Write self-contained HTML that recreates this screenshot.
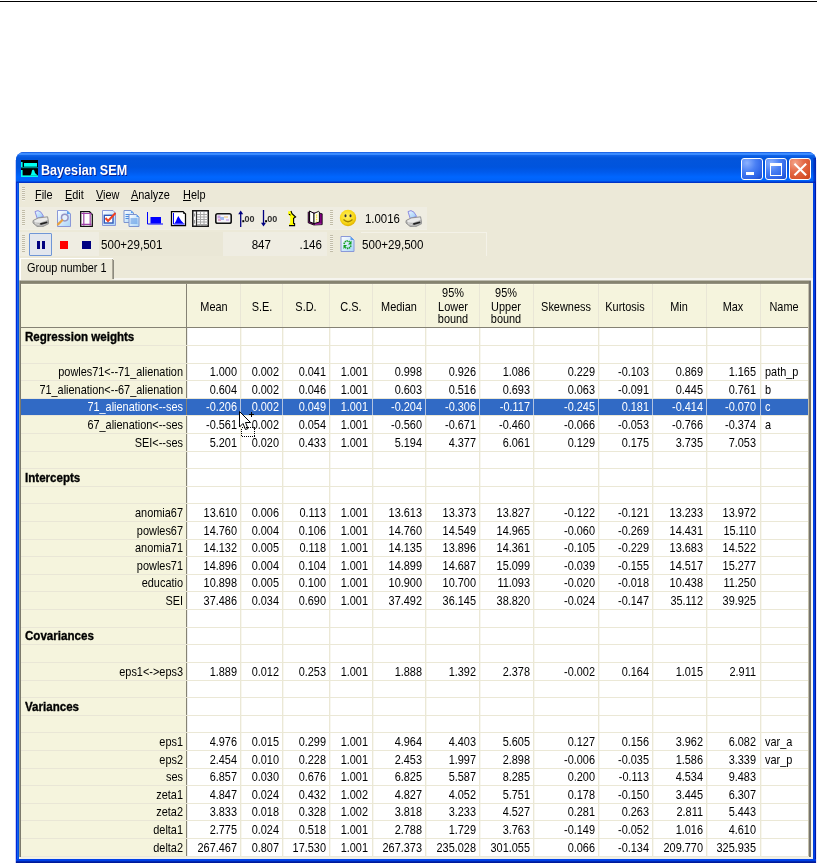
<!DOCTYPE html>
<html><head><meta charset="utf-8"><title>Bayesian SEM</title>
<style>
html,body{margin:0;padding:0;width:817px;height:863px;overflow:hidden;background:#fff}
body{position:relative;font-family:"Liberation Sans",sans-serif;font-size:11px;color:#000}
.a{position:absolute}
.t{position:absolute;line-height:11px;white-space:nowrap;font-size:11px}
.r{text-align:right}
.c{text-align:center}
.u{text-decoration:underline}
</style></head><body><div id="w" style="position:absolute;left:0;top:0;width:817px;height:863px;will-change:transform">

<div class="a" style="left:0;top:1px;width:817px;height:1px;background:#000"></div>
<div class="a" style="left:15px;top:160px;width:1px;height:703px;background:#C8CCF8"></div>
<div class="a" style="left:816px;top:160px;width:1px;height:703px;background:#E8EAFC"></div>
<div class="a" style="left:16px;top:152px;width:800px;height:720px;border-radius:8px 8px 0 0;background:#0841D8"></div>
<div class="a" style="left:16px;top:152px;width:800px;height:31px;border-radius:8px 8px 0 0;background:linear-gradient(to bottom,#0040D0 0px,#3D8EFF 1px,#3A8AFF 2.5px,#0F63E8 3.5px,#0355DB 6px,#0054DD 15px,#005AEC 20px,#0066FF 25px,#0062F8 29px,#0035CC 30px,#0030C0 31px)"></div>
<div class="a" style="left:813px;top:158px;width:3px;height:25px;background:linear-gradient(to right,rgba(0,40,200,0.35),rgba(0,20,160,0.8))"></div>
<div class="a" style="left:16px;top:183px;width:3px;height:680px;background:linear-gradient(to right,#0028D8 0px,#0028D8 1px,#1060F0 1px,#1060F0 2px,#0050E0 2px)"></div>
<div class="a" style="left:813px;top:183px;width:3px;height:680px;background:linear-gradient(to right,#0040E0 0px,#0040E0 2px,#0018A8 2px)"></div>
<div class="a" style="left:16px;top:859px;width:800px;height:4px;background:linear-gradient(to bottom,#0040E8 0px,#0040E8 1.5px,#0028B0 2.5px,#001090 4px)"></div>
<div class="a" style="left:19px;top:183px;width:794px;height:676px;background:#ECE9D8"></div>
<svg class="a" style="left:21px;top:160px" width="17" height="17" viewBox="0 0 17 17">
<rect x="0" y="0" width="17" height="17" fill="#000"/>
<rect x="3" y="3" width="13" height="3.7" fill="#00FFF0"/>
<rect x="0" y="2" width="1.6" height="5" fill="#00FFF0"/>
<rect x="0" y="7" width="17" height="1.2" fill="#007C80"/>
<rect x="0" y="10" width="1.6" height="7" fill="#00FFF0"/>
<rect x="0" y="15.4" width="17" height="1.6" fill="#00FFF0"/>
<polygon points="12.1,9.4 13.3,10.5 14,13 16.6,15.6 9.3,15.6 10.3,13.5 11,10.5" fill="#00FFF0"/>
</svg>
<div class="t" style="top:162.10px;font-size:15px;line-height:15px;left:41.30px;transform-origin:0 0;transform:scaleX(0.84);font-weight:bold;color:#fff;text-shadow:1px 1px 0 #0A1E8C;">Bayesian SEM</div>
<div class="a" style="left:741px;top:158px;width:20px;height:20px;border:1px solid #fff;border-radius:3px;background:radial-gradient(circle at 25% 20%,#8CB2FF 0%,#4A80F4 40%,#2C62E6 75%,#1A48C8 100%)"></div>
<div class="a" style="left:765px;top:158px;width:20px;height:20px;border:1px solid #fff;border-radius:3px;background:radial-gradient(circle at 25% 20%,#8CB2FF 0%,#4A80F4 40%,#2C62E6 75%,#1A48C8 100%)"></div>
<div class="a" style="left:789px;top:158px;width:20px;height:20px;border:1px solid #fff;border-radius:3px;background:radial-gradient(circle at 25% 20%,#F4A48A 0%,#E46A48 40%,#D8532C 75%,#C84018 100%)"></div>
<div class="a" style="left:746px;top:172px;width:8px;height:3px;background:#fff"></div>
<div class="a" style="left:770px;top:163px;width:10px;height:9px;border:1px solid #fff;border-top-width:3px"></div>
<svg class="a" style="left:789px;top:158px" width="22" height="22" viewBox="0 0 22 22">
<path d="M6.2 6.4 L16.4 16.6 M16.4 6.4 L6.2 16.6" stroke="#fff" stroke-width="2.1" stroke-linecap="square"/></svg>
<div class="a" style="left:22px;top:187px;width:3px;height:14px;background:repeating-linear-gradient(to bottom,#C1BCA8 0px,#C1BCA8 1px,#F4F2E8 1px,#F4F2E8 2px)"></div>
<div class="t" style="top:187.60px;font-size:13px;line-height:13px;left:35.20px;transform-origin:0 0;transform:scaleX(0.84);"><span class="u">F</span>ile</div>
<div class="t" style="top:187.60px;font-size:13px;line-height:13px;left:64.60px;transform-origin:0 0;transform:scaleX(0.84);"><span class="u">E</span>dit</div>
<div class="t" style="top:187.60px;font-size:13px;line-height:13px;left:96.40px;transform-origin:0 0;transform:scaleX(0.84);"><span class="u">V</span>iew</div>
<div class="t" style="top:187.60px;font-size:13px;line-height:13px;left:130.60px;transform-origin:0 0;transform:scaleX(0.84);"><span class="u">A</span>nalyze</div>
<div class="t" style="top:187.60px;font-size:13px;line-height:13px;left:182.80px;transform-origin:0 0;transform:scaleX(0.84);"><span class="u">H</span>elp</div>
<div class="a" style="left:19px;top:207px;width:408px;height:22px;background:#EFEDE2"></div>
<div class="a" style="left:19px;top:229px;width:408px;height:1px;background:#F1EFE5"></div>
<div class="a" style="left:22px;top:210px;width:3px;height:16px;background:repeating-linear-gradient(to bottom,#C1BCA8 0px,#C1BCA8 1px,#F4F2E8 1px,#F4F2E8 2px)"></div>
<div class="a" style="left:19px;top:232px;width:308px;height:24px;background:#EFEDE2"></div>
<div class="a" style="left:99px;top:232px;width:124px;height:24px;background:#EAE7D6"></div>
<div class="a" style="left:361px;top:232px;width:125px;height:1px;background:#F4F2E8"></div>
<div class="a" style="left:486px;top:232px;width:1px;height:24px;background:#F4F2E8"></div>
<div class="a" style="left:22px;top:235px;width:3px;height:17px;background:repeating-linear-gradient(to bottom,#C1BCA8 0px,#C1BCA8 1px,#F4F2E8 1px,#F4F2E8 2px)"></div>
<div class="a" style="left:330px;top:210px;width:3px;height:16px;background:repeating-linear-gradient(to bottom,#C1BCA8 0px,#C1BCA8 1px,#F4F2E8 1px,#F4F2E8 2px)"></div>
<div class="a" style="left:329.5px;top:235px;width:3px;height:17px;background:repeating-linear-gradient(to bottom,#C1BCA8 0px,#C1BCA8 1px,#F4F2E8 1px,#F4F2E8 2px)"></div>
<svg class="a" style="left:32px;top:210px" width="17" height="17" viewBox="0 0 17 17"><defs><linearGradient id="gpap" x1="0" y1="0" x2="1" y2="1"><stop offset="0" stop-color="#EEF6FF"/><stop offset="1" stop-color="#90C8F8"/></linearGradient></defs>
<path d="M3 1.6 L6 0.6 L9 2.2 L11.6 6.4 L5.2 8.4 Z" fill="url(#gpap)" stroke="#8C8CE0" stroke-width="1"/>
<path d="M1 10.6 L6 8 L15.6 6.8 L16.8 13.6 L10 17 L5 16.4 L1 13 Z" fill="#B4B4B4" stroke="#8E8E8E" stroke-width="0.9"/>
<path d="M2 10.8 L6.4 8.6 L15 7.6 L15.6 10 L8 12.8 L3 12.4 Z" fill="#EAEAEA"/>
<path d="M8 13.2 L15 11.4 L15.6 13 L8.6 15 Z" fill="#202020"/>
<path d="M3 13.5 L7 14.5" stroke="#D8D8D8" stroke-width="1"/></svg>
<svg class="a" style="left:56px;top:210px" width="16" height="17" viewBox="0 0 16 17"><defs><linearGradient id="gdoc" x1="0" y1="0" x2="1" y2="1"><stop offset="0" stop-color="#FFFFFF"/><stop offset="1" stop-color="#A8D4F8"/></linearGradient></defs>
<path d="M1.5 0.5 L11 0.5 L14.5 4 L14.5 16.5 L1.5 16.5 Z" fill="url(#gdoc)" stroke="#8A98D8" stroke-width="1"/>
<path d="M11 0.5 L11 4 L14.5 4 Z" fill="#5AA0F0"/>
<circle cx="8.8" cy="7.6" r="3.3" fill="#E4F0FC" stroke="#9494C4" stroke-width="1.5"/>
<path d="M6.2 10.2 L2 14.4" stroke="#E8A040" stroke-width="2.2" stroke-linecap="round"/></svg>
<svg class="a" style="left:80px;top:211px" width="13" height="16" viewBox="0 0 13 16"><path d="M0.7 0.7 L9.5 0.7 L12.3 3.5 L12.3 15.3 L0.7 15.3 Z" fill="#fff" stroke="#101010" stroke-width="1.3"/>
<path d="M1.2 2.5 L11.6 2.5 M1.2 13.3 L11.6 13.3 M3.8 1.2 L3.8 14.8 M10.2 2 L10.2 14.8" stroke="#A040A8" stroke-width="1.2"/></svg>
<svg class="a" style="left:102px;top:210px" width="14" height="16" viewBox="0 0 14 16"><path d="M0.5 0.5 L11 0.5 L13.5 3 L13.5 15.5 L0.5 15.5 Z" fill="url(#gdoc)" stroke="#8A98D8" stroke-width="1"/>
<rect x="2.3" y="5.3" width="8.7" height="7.7" fill="#fff" stroke="#3058B8" stroke-width="1.4"/>
<path d="M3.5 8 L6 11 L13.5 3" stroke="#F04020" stroke-width="2" fill="none"/></svg>
<svg class="a" style="left:123px;top:210px" width="17" height="17" viewBox="0 0 17 17"><path d="M1 0.5 L8 0.5 L10.5 3 L10.5 12.5 L1 12.5 Z" fill="url(#gdoc)" stroke="#7C94D0" stroke-width="1"/>
<path d="M8 0.5 L8 3 L10.5 3 Z" fill="#5AA0F0"/>
<path d="M2.5 4.5 L8.5 4.5 M2.5 6.5 L8.5 6.5 M2.5 8.5 L8.5 8.5" stroke="#4C8CE0" stroke-width="1"/>
<path d="M6 4.5 L13.5 4.5 L16 7 L16 16.5 L6 16.5 Z" fill="url(#gdoc)" stroke="#7C94D0" stroke-width="1"/>
<path d="M13.5 4.5 L13.5 7 L16 7 Z" fill="#5AA0F0"/>
<path d="M7.5 9 L14.5 9 M7.5 11 L14.5 11 M7.5 13 L14.5 13" stroke="#4C8CE0" stroke-width="1"/></svg>
<svg class="a" style="left:146px;top:212px" width="18" height="13" viewBox="0 0 18 13"><path d="M1.5 0 L1.5 12 L17 12" stroke="#0000FF" stroke-width="1" fill="none"/>
<rect x="4.5" y="5" width="10.5" height="6.5" fill="#0000FF"/></svg>
<svg class="a" style="left:170px;top:210px" width="17" height="17" viewBox="0 0 17 17"><path d="M1.5 1.5 L13 1.5 L15.5 4 L15.5 15.5 L1.5 15.5 Z" fill="#fff" stroke="#000" stroke-width="1.25"/>
<path d="M13.5 1.5 L13.5 3.5 L15.5 3.5" stroke="#181818" stroke-width="0.9" fill="none"/>
<path d="M3.5 3 L3.5 14 L14.5 14" stroke="#0000FF" stroke-width="1" fill="none"/>
<path d="M8.3 6 L9.8 8.5 L11 10.5 L13.8 13.6 L4.5 13.6 L6 11 L7 8.5 Z" fill="#0000FF"/></svg>
<svg class="a" style="left:192px;top:210px" width="17" height="17" viewBox="0 0 17 17"><rect x="0.75" y="0.75" width="15.5" height="15.5" fill="#FCFCFC" stroke="#181818" stroke-width="1.5"/>
<path d="M4.5 1 L4.5 16" stroke="#303030" stroke-width="1.2"/>
<path d="M2.6 3.5 L2.6 6.5 M2.6 10 L2.6 13.5" stroke="#909090" stroke-width="1"/>
<path d="M5 4.5 L15.5 4.5 M5 7 L15.5 7 M5 9.5 L15.5 9.5 M5 12 L15.5 12 M5 14.5 L15.5 14.5 M8.5 2 L8.5 15.5 M12 2 L12 15.5" stroke="#A8A8A8" stroke-width="1"/></svg>
<svg class="a" style="left:215px;top:213px" width="17" height="11" viewBox="0 0 17 11"><rect x="0.8" y="0.8" width="15.4" height="9.4" rx="1.8" fill="#F4F4FA" stroke="#141414" stroke-width="1.6"/>
<rect x="2.5" y="2.5" width="3" height="3" fill="#C8A0E0"/>
<rect x="5" y="4" width="4" height="3" fill="#A0B8F0"/>
<rect x="3" y="6" width="3" height="2" fill="#E0A8C8"/>
<rect x="9" y="3" width="4" height="2" fill="#F0D8B0"/>
<rect x="11" y="6" width="3" height="2" fill="#D8C0F0"/></svg>
<svg class="a" style="left:237px;top:210px" width="19" height="17" viewBox="0 0 19 17"><path d="M3.7 2.5 L3.7 17" stroke="#000080" stroke-width="1.3"/>
<path d="M3.7 0.6 L1.2 4.2 L6.2 4.2 Z" fill="#000080"/>
<rect x="5.3" y="10.2" width="2" height="2" fill="#000"/></svg>
<div class="t" style="top:214.58px;font-size:9px;line-height:9px;left:244.60px;transform-origin:0 0;font-weight:bold;color:#303030;">00</div>
<svg class="a" style="left:260px;top:210px" width="19" height="17" viewBox="0 0 19 17"><path d="M3.5 0 L3.5 14" stroke="#000080" stroke-width="1.3"/>
<path d="M3.5 16.5 L1 12.8 L6 12.8 Z" fill="#000080"/>
<rect x="5.1" y="10.2" width="2" height="2" fill="#000"/></svg>
<div class="t" style="top:214.58px;font-size:9px;line-height:9px;left:267.20px;transform-origin:0 0;font-weight:bold;color:#303030;">00</div>
<svg class="a" style="left:287px;top:210px" width="10" height="17" viewBox="0 0 10 17"><path d="M1 1.5 L4 1 L5 3.6 L8.6 7 L6.6 8.2 L6.6 13.4 L7.6 13.6 L7.6 15.6 L2 15.6 L2.2 13.6 L3.2 13.4 L3.2 6.4 L1.4 4.6 Z" fill="#FFFF00"/>
<path d="M4 1 L5 3.6 L8.6 7 L6.6 8.2 L6.6 13.4 L7.6 13.6 L7.6 15.6 L2 15.6" stroke="#000" stroke-width="1.1" fill="none"/>
<path d="M1.8 4.2 L3.6 5" stroke="#000" stroke-width="1"/></svg>
<svg class="a" style="left:307px;top:210px" width="16" height="16" viewBox="0 0 16 16"><path d="M1.2 1.8 L1.2 12.8 L6.8 15 L15.2 14.6 L15.2 3.8 L12.6 3.2" fill="#800080" stroke="#000" stroke-width="0.8"/>
<path d="M2.6 1 L7 3.4 L7 13.6 L2.6 11.8 Z" fill="#fff" stroke="#000" stroke-width="1"/>
<path d="M7 3.4 L11.6 1.4 L12.4 2 L12.4 12 L7 13.6 Z" fill="#FFFFF0" stroke="#000" stroke-width="0.9"/>
<path d="M9.6 4.5 L9.6 11.5" stroke="#F0E020" stroke-width="1.4" stroke-dasharray="1.2 0.9"/>
<path d="M8 14.4 L14.4 13.8" stroke="#A030A0" stroke-width="1"/></svg>
<svg class="a" style="left:339px;top:209px" width="18" height="18" viewBox="0 0 18 18"><defs><radialGradient id="gsm" cx="0.45" cy="0.4" r="0.6"><stop offset="0" stop-color="#FFF060"/><stop offset="0.7" stop-color="#F8D818"/><stop offset="1" stop-color="#E0B000"/></radialGradient></defs>
<circle cx="9" cy="9" r="8.2" fill="url(#gsm)"/>
<ellipse cx="6.5" cy="6.8" rx="1" ry="1.5" fill="#2A2A40"/>
<ellipse cx="11.5" cy="6.8" rx="1" ry="1.5" fill="#2A2A40"/>
<path d="M4.5 10.5 Q9 15 13.5 10.5" stroke="#A08000" stroke-width="1.2" fill="none"/></svg>
<div class="t" style="top:213.44px;font-size:12px;line-height:12px;left:364.80px;transform-origin:0 0;transform:scaleX(0.95);">1.0016</div>
<svg class="a" style="left:405px;top:210px" width="17" height="17" viewBox="0 0 17 17"><defs><linearGradient id="gpap" x1="0" y1="0" x2="1" y2="1"><stop offset="0" stop-color="#EEF6FF"/><stop offset="1" stop-color="#90C8F8"/></linearGradient></defs>
<path d="M3 1.6 L6 0.6 L9 2.2 L11.6 6.4 L5.2 8.4 Z" fill="url(#gpap)" stroke="#8C8CE0" stroke-width="1"/>
<path d="M1 10.6 L6 8 L15.6 6.8 L16.8 13.6 L10 17 L5 16.4 L1 13 Z" fill="#B4B4B4" stroke="#8E8E8E" stroke-width="0.9"/>
<path d="M2 10.8 L6.4 8.6 L15 7.6 L15.6 10 L8 12.8 L3 12.4 Z" fill="#EAEAEA"/>
<path d="M8 13.2 L15 11.4 L15.6 13 L8.6 15 Z" fill="#202020"/>
<path d="M3 13.5 L7 14.5" stroke="#D8D8D8" stroke-width="1"/></svg>
<div class="a" style="left:29px;top:233px;width:21px;height:21px;border:1px solid #6F96D6;border-radius:1px;background:#E2E6EE"></div>
<div class="a" style="left:37px;top:241px;width:3px;height:8px;background:#000080"></div>
<div class="a" style="left:42px;top:241px;width:3px;height:8px;background:#000080"></div>
<div class="a" style="left:59.5px;top:241px;width:8.5px;height:8.2px;background:#FF0000"></div>
<div class="a" style="left:82px;top:241px;width:9px;height:8.2px;background:#000080"></div>
<div class="t" style="top:239.44px;font-size:12px;line-height:12px;left:100.80px;transform-origin:0 0;transform:scaleX(0.965);">500+29,501</div>
<div class="t" style="top:239.44px;font-size:12px;line-height:12px;left:71.30px;width:200px;text-align:right;transform-origin:100% 0;transform:scaleX(0.965);">847</div>
<div class="t" style="top:239.44px;font-size:12px;line-height:12px;left:121.70px;width:200px;text-align:right;transform-origin:100% 0;transform:scaleX(0.965);">.146</div>
<svg class="a" style="left:340px;top:236px" width="15" height="16" viewBox="0 0 15 16"><path d="M1 0.5 L10.5 0.5 L14 4 L14 15.5 L1 15.5 Z" fill="url(#gdoc)" stroke="#8A98D8" stroke-width="1"/>
<path d="M10.5 0.5 L10.5 4 L14 4 Z" fill="#5AA0F0"/>
<path d="M4 8 Q5 4.5 8.5 5 L10.5 6.5" stroke="#10A020" stroke-width="1.6" fill="none" stroke-dasharray="1.4 0.6"/>
<path d="M11.5 4.5 L11.5 8.5 L8 8.5 Z" fill="#10A020"/>
<path d="M11 9.5 Q10 12.8 6.5 12.3 L4.5 11" stroke="#10A020" stroke-width="1.6" fill="none" stroke-dasharray="1.4 0.6"/>
<path d="M3.5 13 L3.5 9 L7 9 Z" fill="#10A020"/></svg>
<div class="t" style="top:239.44px;font-size:12px;line-height:12px;left:361.80px;transform-origin:0 0;transform:scaleX(0.965);">500+29,500</div>
<div class="a" style="left:20px;top:258px;width:92px;height:21px;background:#ECE9D8;border-top:1px solid #fff;border-left:1px solid #fff"></div>
<div class="a" style="left:112px;top:259px;width:1px;height:20px;background:#ACA899"></div>
<div class="a" style="left:113px;top:260px;width:1px;height:19px;background:#8C8A7E"></div>
<div class="t" style="top:261.00px;font-size:13px;line-height:13px;left:27.00px;transform-origin:0 0;transform:scaleX(0.84);">Group number 1</div>
<div class="a" style="left:21px;top:284px;width:787px;height:572px;background:#fff"></div>
<div class="a" style="left:21px;top:284px;width:787px;height:43px;background:#F5F4DD"></div>
<div class="a" style="left:21px;top:328px;width:166px;height:528px;background:#F5F4DD"></div>
<div class="a" style="left:21px;top:284px;width:787px;height:1px;background:#FAF9E4"></div>
<div class="a" style="left:114px;top:278px;width:699px;height:2px;background:#F6F5EF"></div>
<div class="a" style="left:19px;top:280px;width:792px;height:1px;background:#BDBBAE"></div>
<div class="a" style="left:19px;top:281px;width:792px;height:2px;background:#85836F"></div>
<div class="a" style="left:19px;top:283px;width:790px;height:1px;background:#93907F"></div>
<div class="a" style="left:20px;top:281px;width:1px;height:576px;background:#7C7A6C"></div>
<div class="a" style="left:19px;top:281px;width:1px;height:576px;background:#A0A090"></div>
<div class="a" style="left:808px;top:284px;width:1px;height:572px;background:#C4C0AC"></div>
<div class="a" style="left:809px;top:281px;width:2px;height:576px;background:#76746C"></div>
<div class="a" style="left:811px;top:279px;width:2px;height:580px;background:#F6F6EE"></div>
<div class="a" style="left:21px;top:856px;width:788px;height:1px;background:#ECE9D8"></div>
<div class="a" style="left:19px;top:857px;width:794px;height:2px;background:#F0F0E8"></div>
<div class="a" style="left:186px;top:284px;width:1px;height:572px;background:#858274"></div>
<div class="a" style="left:187px;top:328px;width:1px;height:528px;background:#EDEDEA"></div>
<div class="a" style="left:240px;top:284px;width:1px;height:43px;background:#E9E6D6"></div>
<div class="a" style="left:240px;top:328px;width:1px;height:528px;background:#EBE8D6"></div>
<div class="a" style="left:241px;top:328px;width:1px;height:528px;background:#F8F7F0"></div>
<div class="a" style="left:282px;top:284px;width:1px;height:43px;background:#E9E6D6"></div>
<div class="a" style="left:282px;top:328px;width:1px;height:528px;background:#EBE8D6"></div>
<div class="a" style="left:283px;top:328px;width:1px;height:528px;background:#F8F7F0"></div>
<div class="a" style="left:329px;top:284px;width:1px;height:43px;background:#E9E6D6"></div>
<div class="a" style="left:329px;top:328px;width:1px;height:528px;background:#EBE8D6"></div>
<div class="a" style="left:330px;top:328px;width:1px;height:528px;background:#F8F7F0"></div>
<div class="a" style="left:372px;top:284px;width:1px;height:43px;background:#E9E6D6"></div>
<div class="a" style="left:372px;top:328px;width:1px;height:528px;background:#EBE8D6"></div>
<div class="a" style="left:373px;top:328px;width:1px;height:528px;background:#F8F7F0"></div>
<div class="a" style="left:425px;top:284px;width:1px;height:43px;background:#E9E6D6"></div>
<div class="a" style="left:425px;top:328px;width:1px;height:528px;background:#EBE8D6"></div>
<div class="a" style="left:426px;top:328px;width:1px;height:528px;background:#F8F7F0"></div>
<div class="a" style="left:479px;top:284px;width:1px;height:43px;background:#E9E6D6"></div>
<div class="a" style="left:479px;top:328px;width:1px;height:528px;background:#EBE8D6"></div>
<div class="a" style="left:480px;top:328px;width:1px;height:528px;background:#F8F7F0"></div>
<div class="a" style="left:533px;top:284px;width:1px;height:43px;background:#E9E6D6"></div>
<div class="a" style="left:533px;top:328px;width:1px;height:528px;background:#EBE8D6"></div>
<div class="a" style="left:534px;top:328px;width:1px;height:528px;background:#F8F7F0"></div>
<div class="a" style="left:598px;top:284px;width:1px;height:43px;background:#E9E6D6"></div>
<div class="a" style="left:598px;top:328px;width:1px;height:528px;background:#EBE8D6"></div>
<div class="a" style="left:599px;top:328px;width:1px;height:528px;background:#F8F7F0"></div>
<div class="a" style="left:652px;top:284px;width:1px;height:43px;background:#E9E6D6"></div>
<div class="a" style="left:652px;top:328px;width:1px;height:528px;background:#EBE8D6"></div>
<div class="a" style="left:653px;top:328px;width:1px;height:528px;background:#F8F7F0"></div>
<div class="a" style="left:706px;top:284px;width:1px;height:43px;background:#E9E6D6"></div>
<div class="a" style="left:706px;top:328px;width:1px;height:528px;background:#EBE8D6"></div>
<div class="a" style="left:707px;top:328px;width:1px;height:528px;background:#F8F7F0"></div>
<div class="a" style="left:760px;top:284px;width:1px;height:43px;background:#E9E6D6"></div>
<div class="a" style="left:760px;top:328px;width:1px;height:528px;background:#EBE8D6"></div>
<div class="a" style="left:761px;top:328px;width:1px;height:528px;background:#F8F7F0"></div>
<div class="a" style="left:21px;top:345px;width:166px;height:1px;background:#E9E6D6"></div>
<div class="a" style="left:187px;top:345px;width:621px;height:1px;background:#EBE8D6"></div>
<div class="a" style="left:21px;top:363px;width:166px;height:1px;background:#E9E6D6"></div>
<div class="a" style="left:187px;top:363px;width:621px;height:1px;background:#EBE8D6"></div>
<div class="a" style="left:21px;top:380px;width:166px;height:1px;background:#E9E6D6"></div>
<div class="a" style="left:187px;top:380px;width:621px;height:1px;background:#EBE8D6"></div>
<div class="a" style="left:21px;top:398px;width:166px;height:1px;background:#E9E6D6"></div>
<div class="a" style="left:187px;top:398px;width:621px;height:1px;background:#EBE8D6"></div>
<div class="a" style="left:21px;top:415px;width:166px;height:1px;background:#E9E6D6"></div>
<div class="a" style="left:187px;top:415px;width:621px;height:1px;background:#EBE8D6"></div>
<div class="a" style="left:21px;top:433px;width:166px;height:1px;background:#E9E6D6"></div>
<div class="a" style="left:187px;top:433px;width:621px;height:1px;background:#EBE8D6"></div>
<div class="a" style="left:21px;top:451px;width:166px;height:1px;background:#E9E6D6"></div>
<div class="a" style="left:187px;top:451px;width:621px;height:1px;background:#EBE8D6"></div>
<div class="a" style="left:21px;top:468px;width:166px;height:1px;background:#E9E6D6"></div>
<div class="a" style="left:187px;top:468px;width:621px;height:1px;background:#EBE8D6"></div>
<div class="a" style="left:21px;top:486px;width:166px;height:1px;background:#E9E6D6"></div>
<div class="a" style="left:187px;top:486px;width:621px;height:1px;background:#EBE8D6"></div>
<div class="a" style="left:21px;top:503px;width:166px;height:1px;background:#E9E6D6"></div>
<div class="a" style="left:187px;top:503px;width:621px;height:1px;background:#EBE8D6"></div>
<div class="a" style="left:21px;top:521px;width:166px;height:1px;background:#E9E6D6"></div>
<div class="a" style="left:187px;top:521px;width:621px;height:1px;background:#EBE8D6"></div>
<div class="a" style="left:21px;top:539px;width:166px;height:1px;background:#E9E6D6"></div>
<div class="a" style="left:187px;top:539px;width:621px;height:1px;background:#EBE8D6"></div>
<div class="a" style="left:21px;top:556px;width:166px;height:1px;background:#E9E6D6"></div>
<div class="a" style="left:187px;top:556px;width:621px;height:1px;background:#EBE8D6"></div>
<div class="a" style="left:21px;top:574px;width:166px;height:1px;background:#E9E6D6"></div>
<div class="a" style="left:187px;top:574px;width:621px;height:1px;background:#EBE8D6"></div>
<div class="a" style="left:21px;top:591px;width:166px;height:1px;background:#E9E6D6"></div>
<div class="a" style="left:187px;top:591px;width:621px;height:1px;background:#EBE8D6"></div>
<div class="a" style="left:21px;top:609px;width:166px;height:1px;background:#E9E6D6"></div>
<div class="a" style="left:187px;top:609px;width:621px;height:1px;background:#EBE8D6"></div>
<div class="a" style="left:21px;top:627px;width:166px;height:1px;background:#E9E6D6"></div>
<div class="a" style="left:187px;top:627px;width:621px;height:1px;background:#EBE8D6"></div>
<div class="a" style="left:21px;top:644px;width:166px;height:1px;background:#E9E6D6"></div>
<div class="a" style="left:187px;top:644px;width:621px;height:1px;background:#EBE8D6"></div>
<div class="a" style="left:21px;top:662px;width:166px;height:1px;background:#E9E6D6"></div>
<div class="a" style="left:187px;top:662px;width:621px;height:1px;background:#EBE8D6"></div>
<div class="a" style="left:21px;top:680px;width:166px;height:1px;background:#E9E6D6"></div>
<div class="a" style="left:187px;top:680px;width:621px;height:1px;background:#EBE8D6"></div>
<div class="a" style="left:21px;top:697px;width:166px;height:1px;background:#E9E6D6"></div>
<div class="a" style="left:187px;top:697px;width:621px;height:1px;background:#EBE8D6"></div>
<div class="a" style="left:21px;top:715px;width:166px;height:1px;background:#E9E6D6"></div>
<div class="a" style="left:187px;top:715px;width:621px;height:1px;background:#EBE8D6"></div>
<div class="a" style="left:21px;top:732px;width:166px;height:1px;background:#E9E6D6"></div>
<div class="a" style="left:187px;top:732px;width:621px;height:1px;background:#EBE8D6"></div>
<div class="a" style="left:21px;top:750px;width:166px;height:1px;background:#E9E6D6"></div>
<div class="a" style="left:187px;top:750px;width:621px;height:1px;background:#EBE8D6"></div>
<div class="a" style="left:21px;top:768px;width:166px;height:1px;background:#E9E6D6"></div>
<div class="a" style="left:187px;top:768px;width:621px;height:1px;background:#EBE8D6"></div>
<div class="a" style="left:21px;top:785px;width:166px;height:1px;background:#E9E6D6"></div>
<div class="a" style="left:187px;top:785px;width:621px;height:1px;background:#EBE8D6"></div>
<div class="a" style="left:21px;top:803px;width:166px;height:1px;background:#E9E6D6"></div>
<div class="a" style="left:187px;top:803px;width:621px;height:1px;background:#EBE8D6"></div>
<div class="a" style="left:21px;top:820px;width:166px;height:1px;background:#E9E6D6"></div>
<div class="a" style="left:187px;top:820px;width:621px;height:1px;background:#EBE8D6"></div>
<div class="a" style="left:21px;top:838px;width:166px;height:1px;background:#E9E6D6"></div>
<div class="a" style="left:187px;top:838px;width:621px;height:1px;background:#EBE8D6"></div>
<div class="a" style="left:21px;top:327px;width:787px;height:1px;background:#858274"></div>
<div class="a" style="left:21px;top:399px;width:787px;height:16px;background:#316AC5"></div>
<div class="a" style="left:186px;top:399px;width:1px;height:16px;background:#858274"></div>
<div class="a" style="left:240px;top:399px;width:1px;height:16px;background:#B4C4E0"></div>
<div class="a" style="left:282px;top:399px;width:1px;height:16px;background:#B4C4E0"></div>
<div class="a" style="left:329px;top:399px;width:1px;height:16px;background:#B4C4E0"></div>
<div class="a" style="left:372px;top:399px;width:1px;height:16px;background:#B4C4E0"></div>
<div class="a" style="left:425px;top:399px;width:1px;height:16px;background:#B4C4E0"></div>
<div class="a" style="left:479px;top:399px;width:1px;height:16px;background:#B4C4E0"></div>
<div class="a" style="left:533px;top:399px;width:1px;height:16px;background:#B4C4E0"></div>
<div class="a" style="left:598px;top:399px;width:1px;height:16px;background:#B4C4E0"></div>
<div class="a" style="left:652px;top:399px;width:1px;height:16px;background:#B4C4E0"></div>
<div class="a" style="left:706px;top:399px;width:1px;height:16px;background:#B4C4E0"></div>
<div class="a" style="left:760px;top:399px;width:1px;height:16px;background:#B4C4E0"></div>
<div class="t" style="top:299.60px;font-size:13px;line-height:13px;left:113.55px;width:200px;text-align:center;transform-origin:50% 0;transform:scaleX(0.84);">Mean</div>
<div class="t" style="top:299.60px;font-size:13px;line-height:13px;left:161.50px;width:200px;text-align:center;transform-origin:50% 0;transform:scaleX(0.84);">S.E.</div>
<div class="t" style="top:299.60px;font-size:13px;line-height:13px;left:206.15px;width:200px;text-align:center;transform-origin:50% 0;transform:scaleX(0.84);">S.D.</div>
<div class="t" style="top:299.60px;font-size:13px;line-height:13px;left:250.90px;width:200px;text-align:center;transform-origin:50% 0;transform:scaleX(0.84);">C.S.</div>
<div class="t" style="top:299.60px;font-size:13px;line-height:13px;left:298.80px;width:200px;text-align:center;transform-origin:50% 0;transform:scaleX(0.84);">Median</div>
<div class="t" style="top:285.60px;font-size:13px;line-height:13px;left:352.50px;width:200px;text-align:center;transform-origin:50% 0;transform:scaleX(0.84);">95%</div>
<div class="t" style="top:299.60px;font-size:13px;line-height:13px;left:352.50px;width:200px;text-align:center;transform-origin:50% 0;transform:scaleX(0.84);">Lower</div>
<div class="t" style="top:311.60px;font-size:13px;line-height:13px;left:352.50px;width:200px;text-align:center;transform-origin:50% 0;transform:scaleX(0.84);">bound</div>
<div class="t" style="top:285.60px;font-size:13px;line-height:13px;left:406.45px;width:200px;text-align:center;transform-origin:50% 0;transform:scaleX(0.84);">95%</div>
<div class="t" style="top:299.60px;font-size:13px;line-height:13px;left:406.45px;width:200px;text-align:center;transform-origin:50% 0;transform:scaleX(0.84);">Upper</div>
<div class="t" style="top:311.60px;font-size:13px;line-height:13px;left:406.45px;width:200px;text-align:center;transform-origin:50% 0;transform:scaleX(0.84);">bound</div>
<div class="t" style="top:299.60px;font-size:13px;line-height:13px;left:465.95px;width:200px;text-align:center;transform-origin:50% 0;transform:scaleX(0.84);">Skewness</div>
<div class="t" style="top:299.60px;font-size:13px;line-height:13px;left:525.45px;width:200px;text-align:center;transform-origin:50% 0;transform:scaleX(0.84);">Kurtosis</div>
<div class="t" style="top:299.60px;font-size:13px;line-height:13px;left:579.45px;width:200px;text-align:center;transform-origin:50% 0;transform:scaleX(0.84);">Min</div>
<div class="t" style="top:299.60px;font-size:13px;line-height:13px;left:633.25px;width:200px;text-align:center;transform-origin:50% 0;transform:scaleX(0.84);">Max</div>
<div class="t" style="top:299.60px;font-size:13px;line-height:13px;left:684.05px;width:200px;text-align:center;transform-origin:50% 0;transform:scaleX(0.84);">Name</div>
<div class="t" style="top:330.00px;font-size:13px;line-height:13px;left:25.00px;transform-origin:0 0;transform:scaleX(0.89);font-weight:bold;-webkit-text-stroke:0.35px #000;">Regression weights</div>
<div class="t" style="top:365.00px;font-size:13px;line-height:13px;left:-16.80px;width:200px;text-align:right;transform-origin:100% 0;transform:scaleX(0.84);">powles71&lt;--71_alienation</div>
<div class="t" style="top:365.00px;font-size:13px;line-height:13px;left:36.60px;width:200px;text-align:right;transform-origin:100% 0;transform:scaleX(0.84);">1.000</div>
<div class="t" style="top:365.00px;font-size:13px;line-height:13px;left:78.60px;width:200px;text-align:right;transform-origin:100% 0;transform:scaleX(0.84);">0.002</div>
<div class="t" style="top:365.00px;font-size:13px;line-height:13px;left:125.90px;width:200px;text-align:right;transform-origin:100% 0;transform:scaleX(0.84);">0.041</div>
<div class="t" style="top:365.00px;font-size:13px;line-height:13px;left:168.10px;width:200px;text-align:right;transform-origin:100% 0;transform:scaleX(0.84);">1.001</div>
<div class="t" style="top:365.00px;font-size:13px;line-height:13px;left:221.70px;width:200px;text-align:right;transform-origin:100% 0;transform:scaleX(0.84);">0.998</div>
<div class="t" style="top:365.00px;font-size:13px;line-height:13px;left:275.50px;width:200px;text-align:right;transform-origin:100% 0;transform:scaleX(0.84);">0.926</div>
<div class="t" style="top:365.00px;font-size:13px;line-height:13px;left:329.60px;width:200px;text-align:right;transform-origin:100% 0;transform:scaleX(0.84);">1.086</div>
<div class="t" style="top:365.00px;font-size:13px;line-height:13px;left:394.50px;width:200px;text-align:right;transform-origin:100% 0;transform:scaleX(0.84);">0.229</div>
<div class="t" style="top:365.00px;font-size:13px;line-height:13px;left:448.60px;width:200px;text-align:right;transform-origin:100% 0;transform:scaleX(0.84);">-0.103</div>
<div class="t" style="top:365.00px;font-size:13px;line-height:13px;left:502.50px;width:200px;text-align:right;transform-origin:100% 0;transform:scaleX(0.84);">0.869</div>
<div class="t" style="top:365.00px;font-size:13px;line-height:13px;left:556.20px;width:200px;text-align:right;transform-origin:100% 0;transform:scaleX(0.84);">1.165</div>
<div class="t" style="top:365.00px;font-size:13px;line-height:13px;left:764.80px;transform-origin:0 0;transform:scaleX(0.84);">path_p</div>
<div class="t" style="top:383.00px;font-size:13px;line-height:13px;left:-16.80px;width:200px;text-align:right;transform-origin:100% 0;transform:scaleX(0.84);">71_alienation&lt;--67_alienation</div>
<div class="t" style="top:383.00px;font-size:13px;line-height:13px;left:36.60px;width:200px;text-align:right;transform-origin:100% 0;transform:scaleX(0.84);">0.604</div>
<div class="t" style="top:383.00px;font-size:13px;line-height:13px;left:78.60px;width:200px;text-align:right;transform-origin:100% 0;transform:scaleX(0.84);">0.002</div>
<div class="t" style="top:383.00px;font-size:13px;line-height:13px;left:125.90px;width:200px;text-align:right;transform-origin:100% 0;transform:scaleX(0.84);">0.046</div>
<div class="t" style="top:383.00px;font-size:13px;line-height:13px;left:168.10px;width:200px;text-align:right;transform-origin:100% 0;transform:scaleX(0.84);">1.001</div>
<div class="t" style="top:383.00px;font-size:13px;line-height:13px;left:221.70px;width:200px;text-align:right;transform-origin:100% 0;transform:scaleX(0.84);">0.603</div>
<div class="t" style="top:383.00px;font-size:13px;line-height:13px;left:275.50px;width:200px;text-align:right;transform-origin:100% 0;transform:scaleX(0.84);">0.516</div>
<div class="t" style="top:383.00px;font-size:13px;line-height:13px;left:329.60px;width:200px;text-align:right;transform-origin:100% 0;transform:scaleX(0.84);">0.693</div>
<div class="t" style="top:383.00px;font-size:13px;line-height:13px;left:394.50px;width:200px;text-align:right;transform-origin:100% 0;transform:scaleX(0.84);">0.063</div>
<div class="t" style="top:383.00px;font-size:13px;line-height:13px;left:448.60px;width:200px;text-align:right;transform-origin:100% 0;transform:scaleX(0.84);">-0.091</div>
<div class="t" style="top:383.00px;font-size:13px;line-height:13px;left:502.50px;width:200px;text-align:right;transform-origin:100% 0;transform:scaleX(0.84);">0.445</div>
<div class="t" style="top:383.00px;font-size:13px;line-height:13px;left:556.20px;width:200px;text-align:right;transform-origin:100% 0;transform:scaleX(0.84);">0.761</div>
<div class="t" style="top:383.00px;font-size:13px;line-height:13px;left:764.80px;transform-origin:0 0;transform:scaleX(0.84);">b</div>
<div class="t" style="top:400.00px;font-size:13px;line-height:13px;left:-16.80px;width:200px;text-align:right;transform-origin:100% 0;transform:scaleX(0.84);color:#fff;">71_alienation&lt;--ses</div>
<div class="t" style="top:400.00px;font-size:13px;line-height:13px;left:36.60px;width:200px;text-align:right;transform-origin:100% 0;transform:scaleX(0.84);color:#fff;">-0.206</div>
<div class="t" style="top:400.00px;font-size:13px;line-height:13px;left:78.60px;width:200px;text-align:right;transform-origin:100% 0;transform:scaleX(0.84);color:#fff;">0.002</div>
<div class="t" style="top:400.00px;font-size:13px;line-height:13px;left:125.90px;width:200px;text-align:right;transform-origin:100% 0;transform:scaleX(0.84);color:#fff;">0.049</div>
<div class="t" style="top:400.00px;font-size:13px;line-height:13px;left:168.10px;width:200px;text-align:right;transform-origin:100% 0;transform:scaleX(0.84);color:#fff;">1.001</div>
<div class="t" style="top:400.00px;font-size:13px;line-height:13px;left:221.70px;width:200px;text-align:right;transform-origin:100% 0;transform:scaleX(0.84);color:#fff;">-0.204</div>
<div class="t" style="top:400.00px;font-size:13px;line-height:13px;left:275.50px;width:200px;text-align:right;transform-origin:100% 0;transform:scaleX(0.84);color:#fff;">-0.306</div>
<div class="t" style="top:400.00px;font-size:13px;line-height:13px;left:329.60px;width:200px;text-align:right;transform-origin:100% 0;transform:scaleX(0.84);color:#fff;">-0.117</div>
<div class="t" style="top:400.00px;font-size:13px;line-height:13px;left:394.50px;width:200px;text-align:right;transform-origin:100% 0;transform:scaleX(0.84);color:#fff;">-0.245</div>
<div class="t" style="top:400.00px;font-size:13px;line-height:13px;left:448.60px;width:200px;text-align:right;transform-origin:100% 0;transform:scaleX(0.84);color:#fff;">0.181</div>
<div class="t" style="top:400.00px;font-size:13px;line-height:13px;left:502.50px;width:200px;text-align:right;transform-origin:100% 0;transform:scaleX(0.84);color:#fff;">-0.414</div>
<div class="t" style="top:400.00px;font-size:13px;line-height:13px;left:556.20px;width:200px;text-align:right;transform-origin:100% 0;transform:scaleX(0.84);color:#fff;">-0.070</div>
<div class="t" style="top:400.00px;font-size:13px;line-height:13px;left:764.80px;transform-origin:0 0;transform:scaleX(0.84);color:#fff;">c</div>
<div class="t" style="top:418.00px;font-size:13px;line-height:13px;left:-16.80px;width:200px;text-align:right;transform-origin:100% 0;transform:scaleX(0.84);">67_alienation&lt;--ses</div>
<div class="t" style="top:418.00px;font-size:13px;line-height:13px;left:36.60px;width:200px;text-align:right;transform-origin:100% 0;transform:scaleX(0.84);">-0.561</div>
<div class="t" style="top:418.00px;font-size:13px;line-height:13px;left:78.60px;width:200px;text-align:right;transform-origin:100% 0;transform:scaleX(0.84);">0.002</div>
<div class="t" style="top:418.00px;font-size:13px;line-height:13px;left:125.90px;width:200px;text-align:right;transform-origin:100% 0;transform:scaleX(0.84);">0.054</div>
<div class="t" style="top:418.00px;font-size:13px;line-height:13px;left:168.10px;width:200px;text-align:right;transform-origin:100% 0;transform:scaleX(0.84);">1.001</div>
<div class="t" style="top:418.00px;font-size:13px;line-height:13px;left:221.70px;width:200px;text-align:right;transform-origin:100% 0;transform:scaleX(0.84);">-0.560</div>
<div class="t" style="top:418.00px;font-size:13px;line-height:13px;left:275.50px;width:200px;text-align:right;transform-origin:100% 0;transform:scaleX(0.84);">-0.671</div>
<div class="t" style="top:418.00px;font-size:13px;line-height:13px;left:329.60px;width:200px;text-align:right;transform-origin:100% 0;transform:scaleX(0.84);">-0.460</div>
<div class="t" style="top:418.00px;font-size:13px;line-height:13px;left:394.50px;width:200px;text-align:right;transform-origin:100% 0;transform:scaleX(0.84);">-0.066</div>
<div class="t" style="top:418.00px;font-size:13px;line-height:13px;left:448.60px;width:200px;text-align:right;transform-origin:100% 0;transform:scaleX(0.84);">-0.053</div>
<div class="t" style="top:418.00px;font-size:13px;line-height:13px;left:502.50px;width:200px;text-align:right;transform-origin:100% 0;transform:scaleX(0.84);">-0.766</div>
<div class="t" style="top:418.00px;font-size:13px;line-height:13px;left:556.20px;width:200px;text-align:right;transform-origin:100% 0;transform:scaleX(0.84);">-0.374</div>
<div class="t" style="top:418.00px;font-size:13px;line-height:13px;left:764.80px;transform-origin:0 0;transform:scaleX(0.84);">a</div>
<div class="t" style="top:436.00px;font-size:13px;line-height:13px;left:-16.80px;width:200px;text-align:right;transform-origin:100% 0;transform:scaleX(0.84);">SEI&lt;--ses</div>
<div class="t" style="top:436.00px;font-size:13px;line-height:13px;left:36.60px;width:200px;text-align:right;transform-origin:100% 0;transform:scaleX(0.84);">5.201</div>
<div class="t" style="top:436.00px;font-size:13px;line-height:13px;left:78.60px;width:200px;text-align:right;transform-origin:100% 0;transform:scaleX(0.84);">0.020</div>
<div class="t" style="top:436.00px;font-size:13px;line-height:13px;left:125.90px;width:200px;text-align:right;transform-origin:100% 0;transform:scaleX(0.84);">0.433</div>
<div class="t" style="top:436.00px;font-size:13px;line-height:13px;left:168.10px;width:200px;text-align:right;transform-origin:100% 0;transform:scaleX(0.84);">1.001</div>
<div class="t" style="top:436.00px;font-size:13px;line-height:13px;left:221.70px;width:200px;text-align:right;transform-origin:100% 0;transform:scaleX(0.84);">5.194</div>
<div class="t" style="top:436.00px;font-size:13px;line-height:13px;left:275.50px;width:200px;text-align:right;transform-origin:100% 0;transform:scaleX(0.84);">4.377</div>
<div class="t" style="top:436.00px;font-size:13px;line-height:13px;left:329.60px;width:200px;text-align:right;transform-origin:100% 0;transform:scaleX(0.84);">6.061</div>
<div class="t" style="top:436.00px;font-size:13px;line-height:13px;left:394.50px;width:200px;text-align:right;transform-origin:100% 0;transform:scaleX(0.84);">0.129</div>
<div class="t" style="top:436.00px;font-size:13px;line-height:13px;left:448.60px;width:200px;text-align:right;transform-origin:100% 0;transform:scaleX(0.84);">0.175</div>
<div class="t" style="top:436.00px;font-size:13px;line-height:13px;left:502.50px;width:200px;text-align:right;transform-origin:100% 0;transform:scaleX(0.84);">3.735</div>
<div class="t" style="top:436.00px;font-size:13px;line-height:13px;left:556.20px;width:200px;text-align:right;transform-origin:100% 0;transform:scaleX(0.84);">7.053</div>
<div class="t" style="top:471.00px;font-size:13px;line-height:13px;left:25.00px;transform-origin:0 0;transform:scaleX(0.89);font-weight:bold;-webkit-text-stroke:0.35px #000;">Intercepts</div>
<div class="t" style="top:506.00px;font-size:13px;line-height:13px;left:-16.80px;width:200px;text-align:right;transform-origin:100% 0;transform:scaleX(0.84);">anomia67</div>
<div class="t" style="top:506.00px;font-size:13px;line-height:13px;left:36.60px;width:200px;text-align:right;transform-origin:100% 0;transform:scaleX(0.84);">13.610</div>
<div class="t" style="top:506.00px;font-size:13px;line-height:13px;left:78.60px;width:200px;text-align:right;transform-origin:100% 0;transform:scaleX(0.84);">0.006</div>
<div class="t" style="top:506.00px;font-size:13px;line-height:13px;left:125.90px;width:200px;text-align:right;transform-origin:100% 0;transform:scaleX(0.84);">0.113</div>
<div class="t" style="top:506.00px;font-size:13px;line-height:13px;left:168.10px;width:200px;text-align:right;transform-origin:100% 0;transform:scaleX(0.84);">1.001</div>
<div class="t" style="top:506.00px;font-size:13px;line-height:13px;left:221.70px;width:200px;text-align:right;transform-origin:100% 0;transform:scaleX(0.84);">13.613</div>
<div class="t" style="top:506.00px;font-size:13px;line-height:13px;left:275.50px;width:200px;text-align:right;transform-origin:100% 0;transform:scaleX(0.84);">13.373</div>
<div class="t" style="top:506.00px;font-size:13px;line-height:13px;left:329.60px;width:200px;text-align:right;transform-origin:100% 0;transform:scaleX(0.84);">13.827</div>
<div class="t" style="top:506.00px;font-size:13px;line-height:13px;left:394.50px;width:200px;text-align:right;transform-origin:100% 0;transform:scaleX(0.84);">-0.122</div>
<div class="t" style="top:506.00px;font-size:13px;line-height:13px;left:448.60px;width:200px;text-align:right;transform-origin:100% 0;transform:scaleX(0.84);">-0.121</div>
<div class="t" style="top:506.00px;font-size:13px;line-height:13px;left:502.50px;width:200px;text-align:right;transform-origin:100% 0;transform:scaleX(0.84);">13.233</div>
<div class="t" style="top:506.00px;font-size:13px;line-height:13px;left:556.20px;width:200px;text-align:right;transform-origin:100% 0;transform:scaleX(0.84);">13.972</div>
<div class="t" style="top:524.00px;font-size:13px;line-height:13px;left:-16.80px;width:200px;text-align:right;transform-origin:100% 0;transform:scaleX(0.84);">powles67</div>
<div class="t" style="top:524.00px;font-size:13px;line-height:13px;left:36.60px;width:200px;text-align:right;transform-origin:100% 0;transform:scaleX(0.84);">14.760</div>
<div class="t" style="top:524.00px;font-size:13px;line-height:13px;left:78.60px;width:200px;text-align:right;transform-origin:100% 0;transform:scaleX(0.84);">0.004</div>
<div class="t" style="top:524.00px;font-size:13px;line-height:13px;left:125.90px;width:200px;text-align:right;transform-origin:100% 0;transform:scaleX(0.84);">0.106</div>
<div class="t" style="top:524.00px;font-size:13px;line-height:13px;left:168.10px;width:200px;text-align:right;transform-origin:100% 0;transform:scaleX(0.84);">1.001</div>
<div class="t" style="top:524.00px;font-size:13px;line-height:13px;left:221.70px;width:200px;text-align:right;transform-origin:100% 0;transform:scaleX(0.84);">14.760</div>
<div class="t" style="top:524.00px;font-size:13px;line-height:13px;left:275.50px;width:200px;text-align:right;transform-origin:100% 0;transform:scaleX(0.84);">14.549</div>
<div class="t" style="top:524.00px;font-size:13px;line-height:13px;left:329.60px;width:200px;text-align:right;transform-origin:100% 0;transform:scaleX(0.84);">14.965</div>
<div class="t" style="top:524.00px;font-size:13px;line-height:13px;left:394.50px;width:200px;text-align:right;transform-origin:100% 0;transform:scaleX(0.84);">-0.060</div>
<div class="t" style="top:524.00px;font-size:13px;line-height:13px;left:448.60px;width:200px;text-align:right;transform-origin:100% 0;transform:scaleX(0.84);">-0.269</div>
<div class="t" style="top:524.00px;font-size:13px;line-height:13px;left:502.50px;width:200px;text-align:right;transform-origin:100% 0;transform:scaleX(0.84);">14.431</div>
<div class="t" style="top:524.00px;font-size:13px;line-height:13px;left:556.20px;width:200px;text-align:right;transform-origin:100% 0;transform:scaleX(0.84);">15.110</div>
<div class="t" style="top:541.00px;font-size:13px;line-height:13px;left:-16.80px;width:200px;text-align:right;transform-origin:100% 0;transform:scaleX(0.84);">anomia71</div>
<div class="t" style="top:541.00px;font-size:13px;line-height:13px;left:36.60px;width:200px;text-align:right;transform-origin:100% 0;transform:scaleX(0.84);">14.132</div>
<div class="t" style="top:541.00px;font-size:13px;line-height:13px;left:78.60px;width:200px;text-align:right;transform-origin:100% 0;transform:scaleX(0.84);">0.005</div>
<div class="t" style="top:541.00px;font-size:13px;line-height:13px;left:125.90px;width:200px;text-align:right;transform-origin:100% 0;transform:scaleX(0.84);">0.118</div>
<div class="t" style="top:541.00px;font-size:13px;line-height:13px;left:168.10px;width:200px;text-align:right;transform-origin:100% 0;transform:scaleX(0.84);">1.001</div>
<div class="t" style="top:541.00px;font-size:13px;line-height:13px;left:221.70px;width:200px;text-align:right;transform-origin:100% 0;transform:scaleX(0.84);">14.135</div>
<div class="t" style="top:541.00px;font-size:13px;line-height:13px;left:275.50px;width:200px;text-align:right;transform-origin:100% 0;transform:scaleX(0.84);">13.896</div>
<div class="t" style="top:541.00px;font-size:13px;line-height:13px;left:329.60px;width:200px;text-align:right;transform-origin:100% 0;transform:scaleX(0.84);">14.361</div>
<div class="t" style="top:541.00px;font-size:13px;line-height:13px;left:394.50px;width:200px;text-align:right;transform-origin:100% 0;transform:scaleX(0.84);">-0.105</div>
<div class="t" style="top:541.00px;font-size:13px;line-height:13px;left:448.60px;width:200px;text-align:right;transform-origin:100% 0;transform:scaleX(0.84);">-0.229</div>
<div class="t" style="top:541.00px;font-size:13px;line-height:13px;left:502.50px;width:200px;text-align:right;transform-origin:100% 0;transform:scaleX(0.84);">13.683</div>
<div class="t" style="top:541.00px;font-size:13px;line-height:13px;left:556.20px;width:200px;text-align:right;transform-origin:100% 0;transform:scaleX(0.84);">14.522</div>
<div class="t" style="top:559.00px;font-size:13px;line-height:13px;left:-16.80px;width:200px;text-align:right;transform-origin:100% 0;transform:scaleX(0.84);">powles71</div>
<div class="t" style="top:559.00px;font-size:13px;line-height:13px;left:36.60px;width:200px;text-align:right;transform-origin:100% 0;transform:scaleX(0.84);">14.896</div>
<div class="t" style="top:559.00px;font-size:13px;line-height:13px;left:78.60px;width:200px;text-align:right;transform-origin:100% 0;transform:scaleX(0.84);">0.004</div>
<div class="t" style="top:559.00px;font-size:13px;line-height:13px;left:125.90px;width:200px;text-align:right;transform-origin:100% 0;transform:scaleX(0.84);">0.104</div>
<div class="t" style="top:559.00px;font-size:13px;line-height:13px;left:168.10px;width:200px;text-align:right;transform-origin:100% 0;transform:scaleX(0.84);">1.001</div>
<div class="t" style="top:559.00px;font-size:13px;line-height:13px;left:221.70px;width:200px;text-align:right;transform-origin:100% 0;transform:scaleX(0.84);">14.899</div>
<div class="t" style="top:559.00px;font-size:13px;line-height:13px;left:275.50px;width:200px;text-align:right;transform-origin:100% 0;transform:scaleX(0.84);">14.687</div>
<div class="t" style="top:559.00px;font-size:13px;line-height:13px;left:329.60px;width:200px;text-align:right;transform-origin:100% 0;transform:scaleX(0.84);">15.099</div>
<div class="t" style="top:559.00px;font-size:13px;line-height:13px;left:394.50px;width:200px;text-align:right;transform-origin:100% 0;transform:scaleX(0.84);">-0.039</div>
<div class="t" style="top:559.00px;font-size:13px;line-height:13px;left:448.60px;width:200px;text-align:right;transform-origin:100% 0;transform:scaleX(0.84);">-0.155</div>
<div class="t" style="top:559.00px;font-size:13px;line-height:13px;left:502.50px;width:200px;text-align:right;transform-origin:100% 0;transform:scaleX(0.84);">14.517</div>
<div class="t" style="top:559.00px;font-size:13px;line-height:13px;left:556.20px;width:200px;text-align:right;transform-origin:100% 0;transform:scaleX(0.84);">15.277</div>
<div class="t" style="top:576.00px;font-size:13px;line-height:13px;left:-16.80px;width:200px;text-align:right;transform-origin:100% 0;transform:scaleX(0.84);">educatio</div>
<div class="t" style="top:576.00px;font-size:13px;line-height:13px;left:36.60px;width:200px;text-align:right;transform-origin:100% 0;transform:scaleX(0.84);">10.898</div>
<div class="t" style="top:576.00px;font-size:13px;line-height:13px;left:78.60px;width:200px;text-align:right;transform-origin:100% 0;transform:scaleX(0.84);">0.005</div>
<div class="t" style="top:576.00px;font-size:13px;line-height:13px;left:125.90px;width:200px;text-align:right;transform-origin:100% 0;transform:scaleX(0.84);">0.100</div>
<div class="t" style="top:576.00px;font-size:13px;line-height:13px;left:168.10px;width:200px;text-align:right;transform-origin:100% 0;transform:scaleX(0.84);">1.001</div>
<div class="t" style="top:576.00px;font-size:13px;line-height:13px;left:221.70px;width:200px;text-align:right;transform-origin:100% 0;transform:scaleX(0.84);">10.900</div>
<div class="t" style="top:576.00px;font-size:13px;line-height:13px;left:275.50px;width:200px;text-align:right;transform-origin:100% 0;transform:scaleX(0.84);">10.700</div>
<div class="t" style="top:576.00px;font-size:13px;line-height:13px;left:329.60px;width:200px;text-align:right;transform-origin:100% 0;transform:scaleX(0.84);">11.093</div>
<div class="t" style="top:576.00px;font-size:13px;line-height:13px;left:394.50px;width:200px;text-align:right;transform-origin:100% 0;transform:scaleX(0.84);">-0.020</div>
<div class="t" style="top:576.00px;font-size:13px;line-height:13px;left:448.60px;width:200px;text-align:right;transform-origin:100% 0;transform:scaleX(0.84);">-0.018</div>
<div class="t" style="top:576.00px;font-size:13px;line-height:13px;left:502.50px;width:200px;text-align:right;transform-origin:100% 0;transform:scaleX(0.84);">10.438</div>
<div class="t" style="top:576.00px;font-size:13px;line-height:13px;left:556.20px;width:200px;text-align:right;transform-origin:100% 0;transform:scaleX(0.84);">11.250</div>
<div class="t" style="top:594.00px;font-size:13px;line-height:13px;left:-16.80px;width:200px;text-align:right;transform-origin:100% 0;transform:scaleX(0.84);">SEI</div>
<div class="t" style="top:594.00px;font-size:13px;line-height:13px;left:36.60px;width:200px;text-align:right;transform-origin:100% 0;transform:scaleX(0.84);">37.486</div>
<div class="t" style="top:594.00px;font-size:13px;line-height:13px;left:78.60px;width:200px;text-align:right;transform-origin:100% 0;transform:scaleX(0.84);">0.034</div>
<div class="t" style="top:594.00px;font-size:13px;line-height:13px;left:125.90px;width:200px;text-align:right;transform-origin:100% 0;transform:scaleX(0.84);">0.690</div>
<div class="t" style="top:594.00px;font-size:13px;line-height:13px;left:168.10px;width:200px;text-align:right;transform-origin:100% 0;transform:scaleX(0.84);">1.001</div>
<div class="t" style="top:594.00px;font-size:13px;line-height:13px;left:221.70px;width:200px;text-align:right;transform-origin:100% 0;transform:scaleX(0.84);">37.492</div>
<div class="t" style="top:594.00px;font-size:13px;line-height:13px;left:275.50px;width:200px;text-align:right;transform-origin:100% 0;transform:scaleX(0.84);">36.145</div>
<div class="t" style="top:594.00px;font-size:13px;line-height:13px;left:329.60px;width:200px;text-align:right;transform-origin:100% 0;transform:scaleX(0.84);">38.820</div>
<div class="t" style="top:594.00px;font-size:13px;line-height:13px;left:394.50px;width:200px;text-align:right;transform-origin:100% 0;transform:scaleX(0.84);">-0.024</div>
<div class="t" style="top:594.00px;font-size:13px;line-height:13px;left:448.60px;width:200px;text-align:right;transform-origin:100% 0;transform:scaleX(0.84);">-0.147</div>
<div class="t" style="top:594.00px;font-size:13px;line-height:13px;left:502.50px;width:200px;text-align:right;transform-origin:100% 0;transform:scaleX(0.84);">35.112</div>
<div class="t" style="top:594.00px;font-size:13px;line-height:13px;left:556.20px;width:200px;text-align:right;transform-origin:100% 0;transform:scaleX(0.84);">39.925</div>
<div class="t" style="top:629.00px;font-size:13px;line-height:13px;left:25.00px;transform-origin:0 0;transform:scaleX(0.89);font-weight:bold;-webkit-text-stroke:0.35px #000;">Covariances</div>
<div class="t" style="top:665.00px;font-size:13px;line-height:13px;left:-16.80px;width:200px;text-align:right;transform-origin:100% 0;transform:scaleX(0.84);">eps1&lt;-&gt;eps3</div>
<div class="t" style="top:665.00px;font-size:13px;line-height:13px;left:36.60px;width:200px;text-align:right;transform-origin:100% 0;transform:scaleX(0.84);">1.889</div>
<div class="t" style="top:665.00px;font-size:13px;line-height:13px;left:78.60px;width:200px;text-align:right;transform-origin:100% 0;transform:scaleX(0.84);">0.012</div>
<div class="t" style="top:665.00px;font-size:13px;line-height:13px;left:125.90px;width:200px;text-align:right;transform-origin:100% 0;transform:scaleX(0.84);">0.253</div>
<div class="t" style="top:665.00px;font-size:13px;line-height:13px;left:168.10px;width:200px;text-align:right;transform-origin:100% 0;transform:scaleX(0.84);">1.001</div>
<div class="t" style="top:665.00px;font-size:13px;line-height:13px;left:221.70px;width:200px;text-align:right;transform-origin:100% 0;transform:scaleX(0.84);">1.888</div>
<div class="t" style="top:665.00px;font-size:13px;line-height:13px;left:275.50px;width:200px;text-align:right;transform-origin:100% 0;transform:scaleX(0.84);">1.392</div>
<div class="t" style="top:665.00px;font-size:13px;line-height:13px;left:329.60px;width:200px;text-align:right;transform-origin:100% 0;transform:scaleX(0.84);">2.378</div>
<div class="t" style="top:665.00px;font-size:13px;line-height:13px;left:394.50px;width:200px;text-align:right;transform-origin:100% 0;transform:scaleX(0.84);">-0.002</div>
<div class="t" style="top:665.00px;font-size:13px;line-height:13px;left:448.60px;width:200px;text-align:right;transform-origin:100% 0;transform:scaleX(0.84);">0.164</div>
<div class="t" style="top:665.00px;font-size:13px;line-height:13px;left:502.50px;width:200px;text-align:right;transform-origin:100% 0;transform:scaleX(0.84);">1.015</div>
<div class="t" style="top:665.00px;font-size:13px;line-height:13px;left:556.20px;width:200px;text-align:right;transform-origin:100% 0;transform:scaleX(0.84);">2.911</div>
<div class="t" style="top:700.00px;font-size:13px;line-height:13px;left:25.00px;transform-origin:0 0;transform:scaleX(0.89);font-weight:bold;-webkit-text-stroke:0.35px #000;">Variances</div>
<div class="t" style="top:735.00px;font-size:13px;line-height:13px;left:-16.80px;width:200px;text-align:right;transform-origin:100% 0;transform:scaleX(0.84);">eps1</div>
<div class="t" style="top:735.00px;font-size:13px;line-height:13px;left:36.60px;width:200px;text-align:right;transform-origin:100% 0;transform:scaleX(0.84);">4.976</div>
<div class="t" style="top:735.00px;font-size:13px;line-height:13px;left:78.60px;width:200px;text-align:right;transform-origin:100% 0;transform:scaleX(0.84);">0.015</div>
<div class="t" style="top:735.00px;font-size:13px;line-height:13px;left:125.90px;width:200px;text-align:right;transform-origin:100% 0;transform:scaleX(0.84);">0.299</div>
<div class="t" style="top:735.00px;font-size:13px;line-height:13px;left:168.10px;width:200px;text-align:right;transform-origin:100% 0;transform:scaleX(0.84);">1.001</div>
<div class="t" style="top:735.00px;font-size:13px;line-height:13px;left:221.70px;width:200px;text-align:right;transform-origin:100% 0;transform:scaleX(0.84);">4.964</div>
<div class="t" style="top:735.00px;font-size:13px;line-height:13px;left:275.50px;width:200px;text-align:right;transform-origin:100% 0;transform:scaleX(0.84);">4.403</div>
<div class="t" style="top:735.00px;font-size:13px;line-height:13px;left:329.60px;width:200px;text-align:right;transform-origin:100% 0;transform:scaleX(0.84);">5.605</div>
<div class="t" style="top:735.00px;font-size:13px;line-height:13px;left:394.50px;width:200px;text-align:right;transform-origin:100% 0;transform:scaleX(0.84);">0.127</div>
<div class="t" style="top:735.00px;font-size:13px;line-height:13px;left:448.60px;width:200px;text-align:right;transform-origin:100% 0;transform:scaleX(0.84);">0.156</div>
<div class="t" style="top:735.00px;font-size:13px;line-height:13px;left:502.50px;width:200px;text-align:right;transform-origin:100% 0;transform:scaleX(0.84);">3.962</div>
<div class="t" style="top:735.00px;font-size:13px;line-height:13px;left:556.20px;width:200px;text-align:right;transform-origin:100% 0;transform:scaleX(0.84);">6.082</div>
<div class="t" style="top:735.00px;font-size:13px;line-height:13px;left:764.80px;transform-origin:0 0;transform:scaleX(0.84);">var_a</div>
<div class="t" style="top:753.00px;font-size:13px;line-height:13px;left:-16.80px;width:200px;text-align:right;transform-origin:100% 0;transform:scaleX(0.84);">eps2</div>
<div class="t" style="top:753.00px;font-size:13px;line-height:13px;left:36.60px;width:200px;text-align:right;transform-origin:100% 0;transform:scaleX(0.84);">2.454</div>
<div class="t" style="top:753.00px;font-size:13px;line-height:13px;left:78.60px;width:200px;text-align:right;transform-origin:100% 0;transform:scaleX(0.84);">0.010</div>
<div class="t" style="top:753.00px;font-size:13px;line-height:13px;left:125.90px;width:200px;text-align:right;transform-origin:100% 0;transform:scaleX(0.84);">0.228</div>
<div class="t" style="top:753.00px;font-size:13px;line-height:13px;left:168.10px;width:200px;text-align:right;transform-origin:100% 0;transform:scaleX(0.84);">1.001</div>
<div class="t" style="top:753.00px;font-size:13px;line-height:13px;left:221.70px;width:200px;text-align:right;transform-origin:100% 0;transform:scaleX(0.84);">2.453</div>
<div class="t" style="top:753.00px;font-size:13px;line-height:13px;left:275.50px;width:200px;text-align:right;transform-origin:100% 0;transform:scaleX(0.84);">1.997</div>
<div class="t" style="top:753.00px;font-size:13px;line-height:13px;left:329.60px;width:200px;text-align:right;transform-origin:100% 0;transform:scaleX(0.84);">2.898</div>
<div class="t" style="top:753.00px;font-size:13px;line-height:13px;left:394.50px;width:200px;text-align:right;transform-origin:100% 0;transform:scaleX(0.84);">-0.006</div>
<div class="t" style="top:753.00px;font-size:13px;line-height:13px;left:448.60px;width:200px;text-align:right;transform-origin:100% 0;transform:scaleX(0.84);">-0.035</div>
<div class="t" style="top:753.00px;font-size:13px;line-height:13px;left:502.50px;width:200px;text-align:right;transform-origin:100% 0;transform:scaleX(0.84);">1.586</div>
<div class="t" style="top:753.00px;font-size:13px;line-height:13px;left:556.20px;width:200px;text-align:right;transform-origin:100% 0;transform:scaleX(0.84);">3.339</div>
<div class="t" style="top:753.00px;font-size:13px;line-height:13px;left:764.80px;transform-origin:0 0;transform:scaleX(0.84);">var_p</div>
<div class="t" style="top:770.00px;font-size:13px;line-height:13px;left:-16.80px;width:200px;text-align:right;transform-origin:100% 0;transform:scaleX(0.84);">ses</div>
<div class="t" style="top:770.00px;font-size:13px;line-height:13px;left:36.60px;width:200px;text-align:right;transform-origin:100% 0;transform:scaleX(0.84);">6.857</div>
<div class="t" style="top:770.00px;font-size:13px;line-height:13px;left:78.60px;width:200px;text-align:right;transform-origin:100% 0;transform:scaleX(0.84);">0.030</div>
<div class="t" style="top:770.00px;font-size:13px;line-height:13px;left:125.90px;width:200px;text-align:right;transform-origin:100% 0;transform:scaleX(0.84);">0.676</div>
<div class="t" style="top:770.00px;font-size:13px;line-height:13px;left:168.10px;width:200px;text-align:right;transform-origin:100% 0;transform:scaleX(0.84);">1.001</div>
<div class="t" style="top:770.00px;font-size:13px;line-height:13px;left:221.70px;width:200px;text-align:right;transform-origin:100% 0;transform:scaleX(0.84);">6.825</div>
<div class="t" style="top:770.00px;font-size:13px;line-height:13px;left:275.50px;width:200px;text-align:right;transform-origin:100% 0;transform:scaleX(0.84);">5.587</div>
<div class="t" style="top:770.00px;font-size:13px;line-height:13px;left:329.60px;width:200px;text-align:right;transform-origin:100% 0;transform:scaleX(0.84);">8.285</div>
<div class="t" style="top:770.00px;font-size:13px;line-height:13px;left:394.50px;width:200px;text-align:right;transform-origin:100% 0;transform:scaleX(0.84);">0.200</div>
<div class="t" style="top:770.00px;font-size:13px;line-height:13px;left:448.60px;width:200px;text-align:right;transform-origin:100% 0;transform:scaleX(0.84);">-0.113</div>
<div class="t" style="top:770.00px;font-size:13px;line-height:13px;left:502.50px;width:200px;text-align:right;transform-origin:100% 0;transform:scaleX(0.84);">4.534</div>
<div class="t" style="top:770.00px;font-size:13px;line-height:13px;left:556.20px;width:200px;text-align:right;transform-origin:100% 0;transform:scaleX(0.84);">9.483</div>
<div class="t" style="top:788.00px;font-size:13px;line-height:13px;left:-16.80px;width:200px;text-align:right;transform-origin:100% 0;transform:scaleX(0.84);">zeta1</div>
<div class="t" style="top:788.00px;font-size:13px;line-height:13px;left:36.60px;width:200px;text-align:right;transform-origin:100% 0;transform:scaleX(0.84);">4.847</div>
<div class="t" style="top:788.00px;font-size:13px;line-height:13px;left:78.60px;width:200px;text-align:right;transform-origin:100% 0;transform:scaleX(0.84);">0.024</div>
<div class="t" style="top:788.00px;font-size:13px;line-height:13px;left:125.90px;width:200px;text-align:right;transform-origin:100% 0;transform:scaleX(0.84);">0.432</div>
<div class="t" style="top:788.00px;font-size:13px;line-height:13px;left:168.10px;width:200px;text-align:right;transform-origin:100% 0;transform:scaleX(0.84);">1.002</div>
<div class="t" style="top:788.00px;font-size:13px;line-height:13px;left:221.70px;width:200px;text-align:right;transform-origin:100% 0;transform:scaleX(0.84);">4.827</div>
<div class="t" style="top:788.00px;font-size:13px;line-height:13px;left:275.50px;width:200px;text-align:right;transform-origin:100% 0;transform:scaleX(0.84);">4.052</div>
<div class="t" style="top:788.00px;font-size:13px;line-height:13px;left:329.60px;width:200px;text-align:right;transform-origin:100% 0;transform:scaleX(0.84);">5.751</div>
<div class="t" style="top:788.00px;font-size:13px;line-height:13px;left:394.50px;width:200px;text-align:right;transform-origin:100% 0;transform:scaleX(0.84);">0.178</div>
<div class="t" style="top:788.00px;font-size:13px;line-height:13px;left:448.60px;width:200px;text-align:right;transform-origin:100% 0;transform:scaleX(0.84);">-0.150</div>
<div class="t" style="top:788.00px;font-size:13px;line-height:13px;left:502.50px;width:200px;text-align:right;transform-origin:100% 0;transform:scaleX(0.84);">3.445</div>
<div class="t" style="top:788.00px;font-size:13px;line-height:13px;left:556.20px;width:200px;text-align:right;transform-origin:100% 0;transform:scaleX(0.84);">6.307</div>
<div class="t" style="top:805.00px;font-size:13px;line-height:13px;left:-16.80px;width:200px;text-align:right;transform-origin:100% 0;transform:scaleX(0.84);">zeta2</div>
<div class="t" style="top:805.00px;font-size:13px;line-height:13px;left:36.60px;width:200px;text-align:right;transform-origin:100% 0;transform:scaleX(0.84);">3.833</div>
<div class="t" style="top:805.00px;font-size:13px;line-height:13px;left:78.60px;width:200px;text-align:right;transform-origin:100% 0;transform:scaleX(0.84);">0.018</div>
<div class="t" style="top:805.00px;font-size:13px;line-height:13px;left:125.90px;width:200px;text-align:right;transform-origin:100% 0;transform:scaleX(0.84);">0.328</div>
<div class="t" style="top:805.00px;font-size:13px;line-height:13px;left:168.10px;width:200px;text-align:right;transform-origin:100% 0;transform:scaleX(0.84);">1.002</div>
<div class="t" style="top:805.00px;font-size:13px;line-height:13px;left:221.70px;width:200px;text-align:right;transform-origin:100% 0;transform:scaleX(0.84);">3.818</div>
<div class="t" style="top:805.00px;font-size:13px;line-height:13px;left:275.50px;width:200px;text-align:right;transform-origin:100% 0;transform:scaleX(0.84);">3.233</div>
<div class="t" style="top:805.00px;font-size:13px;line-height:13px;left:329.60px;width:200px;text-align:right;transform-origin:100% 0;transform:scaleX(0.84);">4.527</div>
<div class="t" style="top:805.00px;font-size:13px;line-height:13px;left:394.50px;width:200px;text-align:right;transform-origin:100% 0;transform:scaleX(0.84);">0.281</div>
<div class="t" style="top:805.00px;font-size:13px;line-height:13px;left:448.60px;width:200px;text-align:right;transform-origin:100% 0;transform:scaleX(0.84);">0.263</div>
<div class="t" style="top:805.00px;font-size:13px;line-height:13px;left:502.50px;width:200px;text-align:right;transform-origin:100% 0;transform:scaleX(0.84);">2.811</div>
<div class="t" style="top:805.00px;font-size:13px;line-height:13px;left:556.20px;width:200px;text-align:right;transform-origin:100% 0;transform:scaleX(0.84);">5.443</div>
<div class="t" style="top:823.00px;font-size:13px;line-height:13px;left:-16.80px;width:200px;text-align:right;transform-origin:100% 0;transform:scaleX(0.84);">delta1</div>
<div class="t" style="top:823.00px;font-size:13px;line-height:13px;left:36.60px;width:200px;text-align:right;transform-origin:100% 0;transform:scaleX(0.84);">2.775</div>
<div class="t" style="top:823.00px;font-size:13px;line-height:13px;left:78.60px;width:200px;text-align:right;transform-origin:100% 0;transform:scaleX(0.84);">0.024</div>
<div class="t" style="top:823.00px;font-size:13px;line-height:13px;left:125.90px;width:200px;text-align:right;transform-origin:100% 0;transform:scaleX(0.84);">0.518</div>
<div class="t" style="top:823.00px;font-size:13px;line-height:13px;left:168.10px;width:200px;text-align:right;transform-origin:100% 0;transform:scaleX(0.84);">1.001</div>
<div class="t" style="top:823.00px;font-size:13px;line-height:13px;left:221.70px;width:200px;text-align:right;transform-origin:100% 0;transform:scaleX(0.84);">2.788</div>
<div class="t" style="top:823.00px;font-size:13px;line-height:13px;left:275.50px;width:200px;text-align:right;transform-origin:100% 0;transform:scaleX(0.84);">1.729</div>
<div class="t" style="top:823.00px;font-size:13px;line-height:13px;left:329.60px;width:200px;text-align:right;transform-origin:100% 0;transform:scaleX(0.84);">3.763</div>
<div class="t" style="top:823.00px;font-size:13px;line-height:13px;left:394.50px;width:200px;text-align:right;transform-origin:100% 0;transform:scaleX(0.84);">-0.149</div>
<div class="t" style="top:823.00px;font-size:13px;line-height:13px;left:448.60px;width:200px;text-align:right;transform-origin:100% 0;transform:scaleX(0.84);">-0.052</div>
<div class="t" style="top:823.00px;font-size:13px;line-height:13px;left:502.50px;width:200px;text-align:right;transform-origin:100% 0;transform:scaleX(0.84);">1.016</div>
<div class="t" style="top:823.00px;font-size:13px;line-height:13px;left:556.20px;width:200px;text-align:right;transform-origin:100% 0;transform:scaleX(0.84);">4.610</div>
<div class="t" style="top:841.00px;font-size:13px;line-height:13px;left:-16.80px;width:200px;text-align:right;transform-origin:100% 0;transform:scaleX(0.84);">delta2</div>
<div class="t" style="top:841.00px;font-size:13px;line-height:13px;left:36.60px;width:200px;text-align:right;transform-origin:100% 0;transform:scaleX(0.84);">267.467</div>
<div class="t" style="top:841.00px;font-size:13px;line-height:13px;left:78.60px;width:200px;text-align:right;transform-origin:100% 0;transform:scaleX(0.84);">0.807</div>
<div class="t" style="top:841.00px;font-size:13px;line-height:13px;left:125.90px;width:200px;text-align:right;transform-origin:100% 0;transform:scaleX(0.84);">17.530</div>
<div class="t" style="top:841.00px;font-size:13px;line-height:13px;left:168.10px;width:200px;text-align:right;transform-origin:100% 0;transform:scaleX(0.84);">1.001</div>
<div class="t" style="top:841.00px;font-size:13px;line-height:13px;left:221.70px;width:200px;text-align:right;transform-origin:100% 0;transform:scaleX(0.84);">267.373</div>
<div class="t" style="top:841.00px;font-size:13px;line-height:13px;left:275.50px;width:200px;text-align:right;transform-origin:100% 0;transform:scaleX(0.84);">235.028</div>
<div class="t" style="top:841.00px;font-size:13px;line-height:13px;left:329.60px;width:200px;text-align:right;transform-origin:100% 0;transform:scaleX(0.84);">301.055</div>
<div class="t" style="top:841.00px;font-size:13px;line-height:13px;left:394.50px;width:200px;text-align:right;transform-origin:100% 0;transform:scaleX(0.84);">0.066</div>
<div class="t" style="top:841.00px;font-size:13px;line-height:13px;left:448.60px;width:200px;text-align:right;transform-origin:100% 0;transform:scaleX(0.84);">-0.134</div>
<div class="t" style="top:841.00px;font-size:13px;line-height:13px;left:502.50px;width:200px;text-align:right;transform-origin:100% 0;transform:scaleX(0.84);">209.770</div>
<div class="t" style="top:841.00px;font-size:13px;line-height:13px;left:556.20px;width:200px;text-align:right;transform-origin:100% 0;transform:scaleX(0.84);">325.935</div>
<svg class="a" style="left:239px;top:411px" width="20" height="27" viewBox="0 0 20 27">
<path d="M0.5 0.5 L0.5 16 L4 12.5 L6.5 18.5 L9 17.5 L6.5 11.5 L11.5 11.5 Z" fill="#fff" stroke="#000" stroke-width="1"/>
<path d="M12.5 1 L12.5 6 M10 3.5 L15 3.5" stroke="#000" stroke-width="1"/>
<rect x="2.5" y="16.5" width="13" height="9" fill="none" stroke="#000" stroke-width="1" stroke-dasharray="1 1" shape-rendering="crispEdges"/>
</svg>
</div></body></html>
